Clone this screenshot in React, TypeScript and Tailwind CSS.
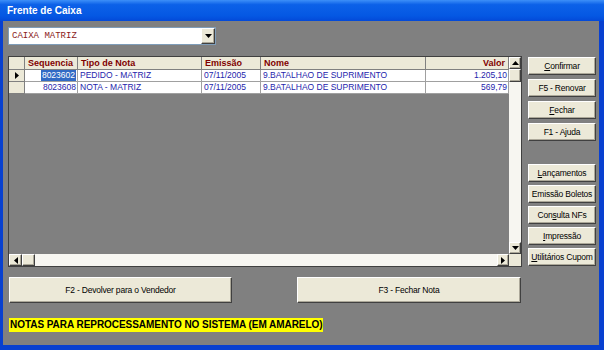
import React from "react";

const raised =
  "bg-[#ECE9D8] border border-t-white border-l-white border-b-[#404040] border-r-[#404040] shadow-[inset_-1px_-1px_0_#ACA899]";

function Tri({ dir }: { dir: "up" | "down" | "left" | "right" }) {
  const pts: Record<string, string> = {
    up: "0,4 3.5,0 7,4",
    down: "0,0 7,0 3.5,4",
    left: "4,0 4,7 0,3.5",
    right: "0,0 0,7 4,3.5",
  };
  const w = dir === "up" || dir === "down" ? 7 : 4;
  const h = dir === "up" || dir === "down" ? 4 : 7;
  return (
    <svg width={w} height={h} viewBox={`0 0 ${w} ${h}`}>
      <polygon points={pts[dir]} fill="#000" />
    </svg>
  );
}

function SideButton({ children }: { children: React.ReactNode }) {
  return (
    <div
      className={`${raised} h-[18px] flex items-center justify-center text-[8.5px] tracking-[-0.2px] text-black leading-none whitespace-nowrap`}
    >
      {children}
    </div>
  );
}

const cols = [
  { w: "w-[53px]", label: "Sequencia", align: "text-left" },
  { w: "w-[124px]", label: "Tipo de Nota", align: "text-left" },
  { w: "w-[59px]", label: "Emissão", align: "text-left" },
  { w: "w-[165px]", label: "Nome", align: "text-left" },
  { w: "w-[83px]", label: "Valor", align: "text-right" },
];

const rows = [
  ["8023602", "PEDIDO - MATRIZ", "07/11/2005", "9.BATALHAO DE SUPRIMENTO", "1.205,10"],
  ["8023608", "NOTA - MATRIZ", "07/11/2005", "9.BATALHAO DE SUPRIMENTO", "569,79"],
];

export default function App() {
  return (
    <div className="w-[604px] h-[350px] flex flex-col bg-[#0840d0] font-['Liberation_Sans',sans-serif]">
      {/* title bar */}
      <div className="h-[21px] flex items-center pl-[7px] bg-[linear-gradient(to_bottom,#3d8ff8_0%,#0c61e8_22%,#0558e3_75%,#0349d8_100%)]">
        <span className="text-white text-[10px] font-bold leading-none">Frente de Caixa</span>
      </div>
      {/* body */}
      <div className="flex-1 ml-[3px] mr-[5px] mb-[5px] bg-[#808080] pl-[5px] pt-[6px] pr-[3px] flex flex-col">
        {/* combo */}
        <div className="w-[208px] h-[18px] bg-white border border-[#7F9DB9] flex items-center">
          <span className="flex-1 pl-[3px] text-[9px] text-[#8B1A1A] font-['Liberation_Mono',monospace] leading-none">
            CAIXA MATRIZ
          </span>
          <div className={`${raised} w-[14px] h-[16px] flex items-center justify-center`}>
            <Tri dir="down" />
          </div>
        </div>

        {/* grid + side buttons */}
        <div className="flex gap-[6px] mt-[11px]">
          <div className="w-[514px] h-[211px] border border-[#404040] bg-[#808080] flex flex-col">
            <div className="flex flex-1 min-h-0">
              <div className="flex-1 flex flex-col">
                {/* header */}
                <div className="flex h-[13px]">
                  <div className="w-[16px] bg-[#ECE9D8] border-r border-b border-[#808080]" />
                  {cols.map((c) => (
                    <div
                      key={c.label}
                      className={`${c.w} ${c.align} bg-[#ECE9D8] border-r border-b border-[#808080] px-[3px] text-[9px] font-bold text-[#800000] leading-[12px] overflow-hidden whitespace-nowrap`}
                    >
                      {c.label}
                    </div>
                  ))}
                </div>
                {rows.map((r, i) => (
                  <div key={i} className="flex h-[12px]">
                    <div className="w-[16px] bg-[#ECE9D8] border-r border-b border-[#808080] flex items-center justify-center">
                      {i === 0 && <Tri dir="right" />}
                    </div>
                    {r.map((v, j) => (
                      <div
                        key={j}
                        className={`${cols[j].w} bg-white border-r border-b border-[#A0A0A0] text-[8.5px] leading-[11px] text-[#2424ac] overflow-hidden whitespace-nowrap flex items-center ${
                          j === 0 || j === 4 ? "justify-end pr-[1px]" : "pl-[2px]"
                        }`}
                      >
                        {i === 0 && j === 0 ? (
                          <span className="bg-[#316AC5] text-white px-[1px]">{v}</span>
                        ) : (
                          v
                        )}
                      </div>
                    ))}
                  </div>
                ))}
              </div>
              {/* vertical scrollbar */}
              <div className="w-[12px] flex flex-col bg-[#F7F6F1]">
                <div className={`${raised} h-[12px] flex items-center justify-center`}>
                  <Tri dir="up" />
                </div>
                <div className={`${raised} h-[13px]`} />
                <div className="flex-1" />
                <div className={`${raised} h-[12px] flex items-center justify-center`}>
                  <Tri dir="down" />
                </div>
              </div>
            </div>
            {/* horizontal scrollbar */}
            <div className="flex h-[12px]">
              <div className="flex-1 flex bg-[#F7F6F1]">
                <div className={`${raised} w-[13px] flex items-center justify-center`}>
                  <Tri dir="left" />
                </div>
                <div className={`${raised} w-[13px]`} />
                <div className="flex-1" />
                <div className={`${raised} w-[12px] flex items-center justify-center`}>
                  <Tri dir="right" />
                </div>
              </div>
              <div className="w-[12px] bg-[#ECE9D8]" />
            </div>
          </div>

          {/* side buttons */}
          <div className="w-[68px] flex flex-col pt-[1px]">
            <div className="flex flex-col gap-[4px]">
              <SideButton>
                <span className="underline">C</span>onfirmar
              </SideButton>
              <SideButton>F5 - Renovar</SideButton>
              <SideButton>
                <span className="underline">F</span>echar
              </SideButton>
              <SideButton>F1 - Ajuda</SideButton>
            </div>
            <div className="flex flex-col gap-[3px] mt-[23px]">
              <SideButton>
                <span className="underline">L</span>ançamentos
              </SideButton>
              <SideButton>Emissão Boletos</SideButton>
              <SideButton>
                Con<span className="underline">s</span>ulta NFs
              </SideButton>
              <SideButton>
                <span className="underline">I</span>mpressão
              </SideButton>
              <SideButton>
                <span className="underline">U</span>tilitários Cupom
              </SideButton>
            </div>
          </div>
        </div>

        {/* bottom buttons */}
        <div className="flex mt-[10px] ml-[1px] gap-[65px]">
          <div
            className={`${raised} w-[223px] h-[26px] flex items-center justify-center text-[8.5px] tracking-[-0.2px] text-black`}
          >
            F2 - Devolver para o Vendedor
          </div>
          <div
            className={`${raised} w-[224px] h-[26px] flex items-center justify-center text-[8.5px] tracking-[-0.2px] text-black`}
          >
            F3 - Fechar Nota
          </div>
        </div>

        {/* yellow label */}
        <div className="mt-[15px] ml-[1px] w-[314px] h-[14px] bg-[#FFFF00] flex items-center pl-[1px]">
          <span className="text-[10px] font-bold text-black leading-none whitespace-nowrap tracking-[-0.05px]">
            NOTAS PARA REPROCESSAMENTO NO SISTEMA (EM AMARELO)
          </span>
        </div>
      </div>
    </div>
  );
}
